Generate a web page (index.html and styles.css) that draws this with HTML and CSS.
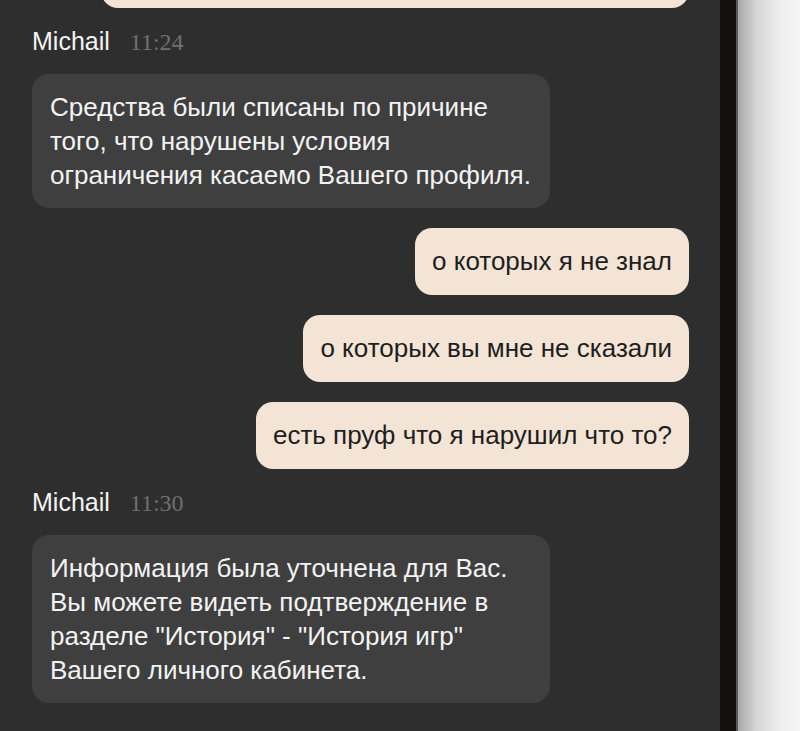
FILE: index.html
```html
<!DOCTYPE html>
<html lang="ru">
<head>
    <meta charset="UTF-8">
    <meta name="viewport" content="width=device-width, initial-scale=1.0">
    <title>Чат поддержки</title>
    <link rel="stylesheet" href="styles.css">
</head>
<body>
    <div class="chat">
        <div class="bubble bubble-out bubble-cut"></div>

        <div class="sender">
            <span class="sender-name">Michail</span>
            <span class="sender-time">11:24</span>
        </div>
        <div class="bubble bubble-in">Средства были списаны по причине<br>того, что нарушены условия<br>ограничения касаемо Вашего профиля.</div>

        <div class="bubble bubble-out">о которых я не знал</div>
        <div class="bubble bubble-out">о которых вы мне не сказали</div>
        <div class="bubble bubble-out">есть пруф что я нарушил что то?</div>

        <div class="sender">
            <span class="sender-name">Michail</span>
            <span class="sender-time">11:30</span>
        </div>
        <div class="bubble bubble-in">Информация была уточнена для Вас.<br>Вы можете видеть подтверждение в<br>разделе "История" - "История игр"<br>Вашего личного кабинета.</div>
    </div>
    <div class="frame"></div>
    <div class="backdrop"></div>
</body>
</html>
```

FILE: styles.css
```css
* {
    margin: 0;
    padding: 0;
    box-sizing: border-box;
}

body {
    font-family: "Liberation Sans", Arial, sans-serif;
    background: #f4f4f4;
    height: 731px;
    overflow: hidden;
    display: flex;
}

.chat {
    width: 720px;
    flex-shrink: 0;
    background: #2e2e2e;
    padding: 0 31px 0 32px;
    display: flex;
    flex-direction: column;
    align-items: flex-start;
    gap: 20px;
}

.frame {
    width: 18px;
    flex-shrink: 0;
    background: #141010;
    border-right: 2px solid #5a5858;
}

.backdrop {
    flex: 1;
    background: linear-gradient(to right, #a9a9a9 0%, #d6d6d6 30%, #ececec 65%, #f6f6f6 100%);
}

.sender {
    display: flex;
    align-items: baseline;
    gap: 20px;
    height: 26px;
    line-height: 26px;
}

.sender-name {
    color: #f4f4f4;
    font-size: 25px;
}

.sender-time {
    color: #6f6f6f;
    font-family: "Liberation Serif", "Times New Roman", serif;
    font-size: 24px;
}

.bubble {
    border-radius: 17px;
    font-size: 26px;
    line-height: 34px;
    padding: 16px 18px;
    white-space: nowrap;
}

.bubble-in {
    width: 518px;
    background: #3f3f3f;
    color: #f3f3f3;
}

.bubble-out {
    align-self: flex-end;
    background: #f3e4d5;
    color: #1e1e1e;
    padding: 16px 17px 17px;
}

.bubble-cut {
    width: 588px;
    height: 67px;
    margin-top: -59px;
}
```
